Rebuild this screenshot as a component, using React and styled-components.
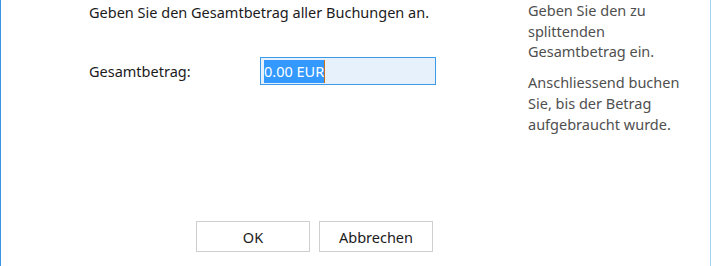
import React from "react";
import styled, { createGlobalStyle } from "styled-components";

const Global = createGlobalStyle`
  html, body {
    margin: 0;
    padding: 0;
    background: #ffffff;
  }
  body {
    font-family: "Noto Sans", "Open Sans", sans-serif;
    font-size: 14.5px;
  }
`;

const App = () => {
  return (
    <>
      <Global />
      <Window>
        <Main>
          <Intro>Geben Sie den Gesamtbetrag aller Buchungen an.</Intro>
          <FieldRow>
            <Label>Gesamtbetrag:</Label>
            <Field>
              <Selected>0.00 EUR</Selected>
              <Caret />
            </Field>
          </FieldRow>
          <Spacer />
          <Buttons>
            <Button>OK</Button>
            <Button>Abbrechen</Button>
          </Buttons>
        </Main>
        <Side>
          <Para>Geben Sie den zu splittenden Gesamtbetrag ein.</Para>
          <Para>Anschliessend buchen Sie, bis der Betrag aufgebraucht wurde.</Para>
        </Side>
      </Window>
    </>
  );
};

export default App;

const Window = styled.div`
  width: 711px;
  height: 266px;
  box-sizing: border-box;
  border-left: 1px solid #3a95e4;
  border-right: 1px solid #a6d2f4;
  display: flex;
  color: #1b1b1b;
`;

const Main = styled.div`
  width: 527px;
  padding: 2px 0 14px 88px;
  box-sizing: border-box;
  display: flex;
  flex-direction: column;
`;

const Intro = styled.div`
  line-height: 20px;
`;

const FieldRow = styled.div`
  display: flex;
  align-items: center;
  margin-top: 35px;
`;

const Label = styled.div`
  width: 171px;
`;

const Field = styled.div`
  width: 176px;
  height: 28px;
  box-sizing: border-box;
  border: 1px solid #3d9ae6;
  background: #e6f1fc;
  display: flex;
  align-items: center;
  padding-left: 3px;
`;

const Selected = styled.span`
  background: #3399ff;
  color: #ffffff;
  line-height: 23px;
`;

const Caret = styled.span`
  width: 1px;
  height: 23px;
  background: #c86f1c;
`;

const Spacer = styled.div`
  flex: 1;
`;

const Buttons = styled.div`
  display: flex;
  gap: 9px;
  padding-left: 107px;
`;

const Button = styled.div`
  width: 114px;
  height: 31px;
  box-sizing: border-box;
  border: 1px solid #cfcfcf;
  background: #ffffff;
  display: flex;
  align-items: center;
  justify-content: center;
`;

const Side = styled.div`
  flex: 1;
  padding: 0 10px 0 0;
  color: #4f4f4f;
  line-height: 20.7px;
`;

const Para = styled.p`
  margin: 0 0 10px;
  width: 162px;
`;
